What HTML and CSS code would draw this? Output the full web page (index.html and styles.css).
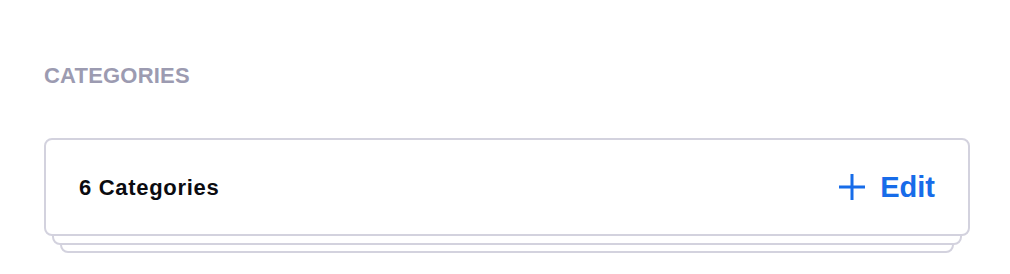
FILE: index.html
```html
<!DOCTYPE html>
<html>
<head>
<meta charset="utf-8">
<link rel="stylesheet" href="styles.css">
</head>
<body>
<section class="section">
  <h2 class="label">CATEGORIES</h2>
  <div class="stack">
    <div class="layer layer-back"></div>
    <div class="layer layer-mid"></div>
    <div class="card">
      <span class="count">6 Categories</span>
      <button class="edit" type="button">
        <svg class="plus" width="26" height="26" viewBox="0 0 26 26" aria-hidden="true">
          <path d="M13 0V26M0 13H26" stroke="currentColor" stroke-width="3" fill="none"/>
        </svg>
        <span>Edit</span>
      </button>
    </div>
  </div>
</section>
</body>
</html>
```
FILE: styles.css
```css
html, body {
  margin: 0;
  padding: 0;
  background: #ffffff;
}
body {
  font-family: "Liberation Sans", Arial, sans-serif;
  min-height: 274px;
}
.section {
  padding: 63px 40px 38px 44px;
}
.label {
  margin: 0;
  font-size: 22px;
  line-height: 25px;
  font-weight: 700;
  color: #9c9bb1;
  letter-spacing: 0.2px;
}
.stack {
  position: relative;
  margin-top: 50px;
}
.layer {
  position: absolute;
  box-sizing: border-box;
  height: 40px;
  border: 2px solid #d3d2de;
  border-radius: 8px;
  background: #ffffff;
}
.layer-mid {
  left: 8px;
  right: 8px;
  bottom: -9px;
}
.layer-back {
  left: 16px;
  right: 16px;
  bottom: -17px;
}
.card {
  position: relative;
  box-sizing: border-box;
  height: 98px;
  border: 2px solid #d3d2de;
  border-radius: 8px;
  background: #ffffff;
  display: flex;
  align-items: center;
  justify-content: space-between;
  padding: 0 33px 0 33px;
}
.count {
  font-size: 22px;
  font-weight: 700;
  color: #0b0b10;
  letter-spacing: 0.7px;
  margin-top: 2px;
}
.edit {
  display: flex;
  align-items: center;
  gap: 15px;
  border: 0;
  background: none;
  padding: 0;
  font-family: inherit;
  font-size: 29px;
  font-weight: 700;
  color: #176ce9;
  cursor: pointer;
}
.plus {
  display: block;
}
```
